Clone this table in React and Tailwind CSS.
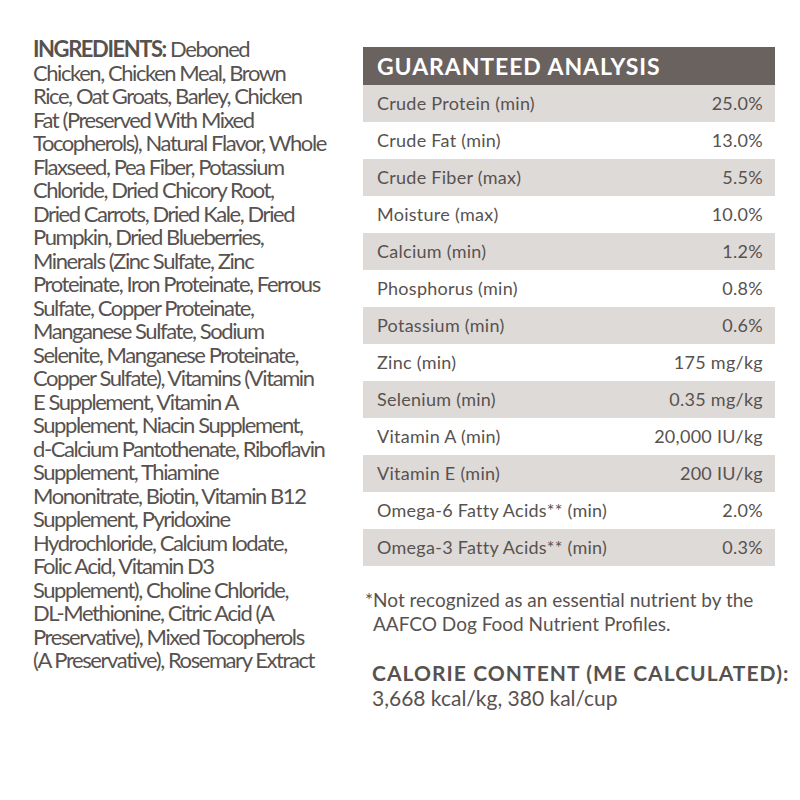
const ingredientLines = [
  null,
  "Chicken, Chicken Meal, Brown",
  "Rice, Oat Groats, Barley, Chicken",
  "Fat (Preserved With Mixed",
  "Tocopherols), Natural Flavor, Whole",
  "Flaxseed, Pea Fiber, Potassium",
  "Chloride, Dried Chicory Root,",
  "Dried Carrots, Dried Kale, Dried",
  "Pumpkin, Dried Blueberries,",
  "Minerals (Zinc Sulfate, Zinc",
  "Proteinate, Iron Proteinate, Ferrous",
  "Sulfate, Copper Proteinate,",
  "Manganese Sulfate, Sodium",
  "Selenite, Manganese Proteinate,",
  "Copper Sulfate), Vitamins (Vitamin",
  "E Supplement, Vitamin A",
  "Supplement, Niacin Supplement,",
  "d-Calcium Pantothenate, Riboflavin",
  "Supplement, Thiamine",
  "Mononitrate, Biotin, Vitamin B12",
  "Supplement, Pyridoxine",
  "Hydrochloride, Calcium Iodate,",
  "Folic Acid, Vitamin D3",
  "Supplement), Choline Chloride,",
  "DL-Methionine, Citric Acid (A",
  "Preservative), Mixed Tocopherols",
  "(A Preservative), Rosemary Extract",
];

const analysis = [
  ["Crude Protein (min)", "25.0%"],
  ["Crude Fat (min)", "13.0%"],
  ["Crude Fiber (max)", "5.5%"],
  ["Moisture (max)", "10.0%"],
  ["Calcium (min)", "1.2%"],
  ["Phosphorus (min)", "0.8%"],
  ["Potassium (min)", "0.6%"],
  ["Zinc (min)", "175 mg/kg"],
  ["Selenium (min)", "0.35 mg/kg"],
  ["Vitamin A (min)", "20,000 IU/kg"],
  ["Vitamin E (min)", "200 IU/kg"],
  ["Omega-6 Fatty Acids** (min)", "2.0%"],
  ["Omega-3 Fatty Acids** (min)", "0.3%"],
];

export default function App() {
  return (
    <div className="w-[800px] h-[800px] bg-white text-[#58524f] font-['Lato',sans-serif] flex">
      {/* ingredientes */}
      <div className="w-[330px] pl-[33px] pt-[37px] text-[22px] leading-[23.5px] tracking-[-0.065em]">
        {ingredientLines.map((line, i) =>
          line === null ? (
            <div key={i} className="whitespace-nowrap">
              <span className="font-bold">INGREDIENTS:</span> Deboned
            </div>
          ) : (
            <div key={i} className="whitespace-nowrap">{line}</div>
          )
        )}
      </div>

      {/* analisis */}
      <div className="w-[412px] ml-[33px] pt-[47px] flex flex-col">
        <div className="h-[38px] bg-[#6a625f] text-white font-bold text-[23px] tracking-[0.04em] px-[14px] flex items-center">
          GUARANTEED ANALYSIS
        </div>
        {analysis.map(([label, value], i) => (
          <div
            key={label}
            className={`h-[37px] flex items-center justify-between pl-[14px] pr-[12px] text-[18px] tracking-[0.015em] ${
              i % 2 === 0 ? "bg-[#dedad8]" : "bg-white"
            }`}
          >
            <span>{label}</span>
            <span>{value}</span>
          </div>
        ))}

        <div className="mt-[22px] text-[19px] leading-[24px] pl-[2px]">
          <div>*Not recognized as an essential nutrient by the</div>
          <div className="pl-[8px]">AAFCO Dog Food Nutrient Profiles.</div>
        </div>

        <div className="mt-[24px] pl-[9px] text-[21px] leading-[25px]">
          <div className="font-bold whitespace-nowrap tracking-[0.05em]">CALORIE CONTENT (ME CALCULATED):</div>
          <div>3,668 kcal/kg, 380 kal/cup</div>
        </div>
      </div>
    </div>
  );
}
